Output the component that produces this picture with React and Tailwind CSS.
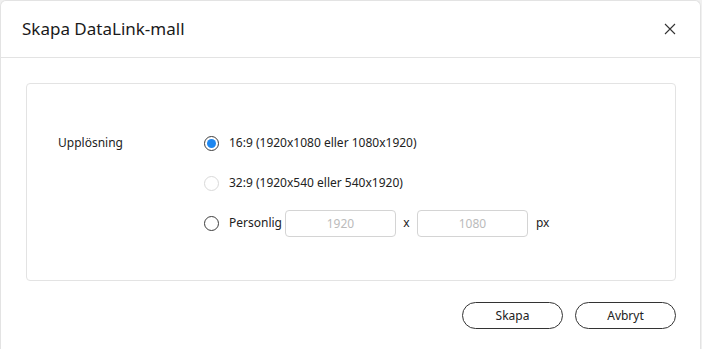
import React, { useState } from 'react';

const Radio = ({ checked, disabled, onClick }) => (
    <button
        onClick={onClick}
        className={`w-[15px] h-[15px] rounded-full border flex items-center justify-center shrink-0 ${
            checked ? 'border-[#3d3d3d]' : disabled ? 'border-[#d9d9d9]' : 'border-[#3d3d3d]'
        }`}
    >
        {checked && <span className="w-[9px] h-[9px] rounded-full bg-[#1e87f0]"></span>}
    </button>
);

const App = () => {
    const [mode, setMode] = useState('16:9');

    return (
        <div className="w-[702px] h-[349px] bg-[#f0f0f0] font-['Noto_Sans',sans-serif] text-[#222]">
            <div className="w-[701px] h-[349px] bg-white border border-[#e3e3e3] border-b-0 rounded-t-[6px] flex flex-col">
                {/* Header */}
                <div className="h-[57px] flex items-center justify-between pl-[21px] pr-[20px] border-b border-[#e3e3e3]">
                    <h1 className="text-[17px] text-[#1a1a1a]">Skapa DataLink-mall</h1>
                    <button className="w-5 h-5 flex items-center justify-center">
                        <svg width="12" height="12" viewBox="0 0 12 12" stroke="#333" strokeWidth="1.1">
                            <path d="M1 1L11 11M11 1L1 11" />
                        </svg>
                    </button>
                </div>

                {/* Body */}
                <div className="pl-[25px] pr-[24px] pt-[25px]">
                    <div className="h-[198px] border border-[#e3e3e3] rounded-[4px] flex pt-[43px] pl-[31px] text-[12px]">
                        <div className="w-[146px] h-[32px] flex items-center">Upplösning</div>
                        <div className="flex flex-col gap-[8px]">
                            <div className="h-[32px] flex items-center gap-[10px]">
                                <Radio checked={mode === '16:9'} onClick={() => setMode('16:9')} />
                                <span>16:9 (1920x1080 eller 1080x1920)</span>
                            </div>
                            <div className="h-[32px] flex items-center gap-[10px]">
                                <Radio disabled />
                                <span>32:9 (1920x540 eller 540x1920)</span>
                            </div>
                            <div className="h-[32px] flex items-center">
                                <Radio checked={mode === 'custom'} onClick={() => setMode('custom')} />
                                <span className="ml-[10px] mr-[3px]">Personlig</span>
                                <input
                                    className="w-[111px] h-[27px] border border-[#d4d4d4] rounded-[4px] text-center text-[#bbb] placeholder-[#bbb] outline-none"
                                    placeholder="1920"
                                />
                                <span className="w-[21px] text-center">x</span>
                                <input
                                    className="w-[111px] h-[27px] border border-[#d4d4d4] rounded-[4px] text-center text-[#bbb] placeholder-[#bbb] outline-none"
                                    placeholder="1080"
                                />
                                <span className="ml-[8px]">px</span>
                            </div>
                        </div>
                    </div>
                </div>

                {/* Footer */}
                <div className="flex justify-end gap-[12px] pr-[24px] pt-[21px]">
                    <button className="w-[101px] h-[27px] rounded-full border border-[#333] text-[12px]">Skapa</button>
                    <button className="w-[101px] h-[27px] rounded-full border border-[#333] text-[12px]">Avbryt</button>
                </div>
            </div>
        </div>
    );
};

export default App;
